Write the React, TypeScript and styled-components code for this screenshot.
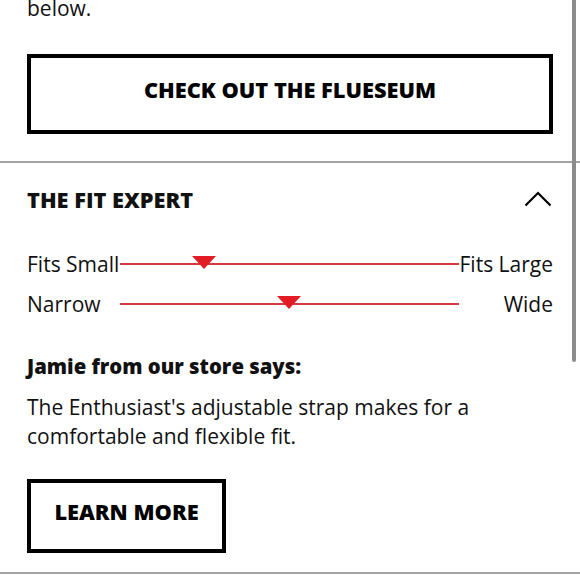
import React from "react";
import styled, { createGlobalStyle } from "styled-components";

const Global = createGlobalStyle`
  html, body { margin: 0; padding: 0; background: #fff; }
  body { font-family: "Open Sans", Lato, Arial, sans-serif; color: #111; }
  * { box-sizing: border-box; }
`;

const Page = styled.div`
  position: relative;
  width: 580px;
  height: 580px;
  overflow: hidden;
  background: #fff;
`;

const Section = styled.section`
  padding: 0 27px 27px;
  border-bottom: 2px solid #a3a3a3;
`;

const Intro = styled.p`
  margin: -7px 0 0;
  font-size: 21px;
  line-height: 30px;
`;

const OutlineButton = styled.button<{ $full?: boolean; $h: number }>`
  display: flex;
  align-items: center;
  justify-content: center;
  width: ${(p) => (p.$full ? "100%" : "199px")};
  height: ${(p) => p.$h}px;
  margin: 0;
  padding: 0 0 10px;
  background: #fff;
  border: 4px solid #000;
  font-family: inherit;
  font-weight: 800;
  font-size: 21.8px;
  color: #000;
  cursor: pointer;
`;

const TopButtonWrap = styled.div`
  margin-top: 31px;
`;

const Accordion = styled.section`
  padding: 0 27px 19px;
  border-bottom: 2px solid #a3a3a3;
`;

const Header = styled.div`
  display: flex;
  align-items: center;
  justify-content: space-between;
  height: 74px;
  padding-bottom: 2px;
`;

const Title = styled.h2`
  margin: 0;
  font-size: 21.8px;
  font-weight: 800;
`;

const Chevron = styled.svg`
  width: 28px;
  height: 16px;
  margin-right: 1px;
`;

const Sliders = styled.div`
  display: flex;
  flex-direction: column;
  gap: 12px;
  margin-top: 13px;
`;

const SliderRow = styled.div`
  display: grid;
  grid-template-columns: 93px 1fr 94px;
  align-items: center;
  height: 28px;
`;

const Label = styled.span<{ $right?: boolean }>`
  font-size: 21px;
  white-space: nowrap;
  text-align: ${(p) => (p.$right ? "right" : "left")};
  direction: ${(p) => (p.$right ? "rtl" : "ltr")};
`;

const Track = styled.div`
  position: relative;
  height: 2px;
  background: #d63a40;
`;

const Marker = styled.div`
  position: absolute;
  top: -7px;
  width: 0;
  height: 0;
  margin-left: -12.5px;
  border-left: 12.5px solid transparent;
  border-right: 12.5px solid transparent;
  border-top: 13px solid #e31b25;
`;

const Quote = styled.h3`
  margin: 35px 0 0;
  font-size: 20.3px;
  font-weight: 800;
  line-height: 26px;
`;

const Body = styled.p`
  margin: 14px 0 0;
  font-size: 21px;
  line-height: 29px;
`;

const LearnWrap = styled.div`
  margin-top: 28px;
`;

const Scrollbar = styled.div`
  position: absolute;
  top: 0;
  right: 4px;
  width: 4px;
  height: 362px;
  border-radius: 0 0 2px 2px;
  background: #8c8c8c;
`;

const sliders = [
  { left: "Fits Small", right: "Fits Large", pos: 25 },
  { left: "Narrow", right: "Wide", pos: 50 },
];

export default function App() {
  return (
    <Page>
      <Global />
      <Section>
        <Intro>below.</Intro>
        <TopButtonWrap>
          <OutlineButton $full $h={80}>CHECK OUT THE FLUESEUM</OutlineButton>
        </TopButtonWrap>
      </Section>
      <Accordion>
        <Header>
          <Title>THE FIT EXPERT</Title>
          <Chevron viewBox="0 0 28 16">
            <path d="M1.5 14.5 L14 2 L26.5 14.5" fill="none" stroke="#000" strokeWidth="2.2" />
          </Chevron>
        </Header>
        <Sliders>
          {sliders.map((s) => (
            <SliderRow key={s.left}>
              <Label>{s.left}</Label>
              <Track>
                <Marker style={{ left: `${s.pos}%` }} />
              </Track>
              <Label $right>{s.right}</Label>
            </SliderRow>
          ))}
        </Sliders>
        <Quote>Jamie from our store says:</Quote>
        <Body>
          The Enthusiast's adjustable strap makes for a
          <br />
          comfortable and flexible fit.
        </Body>
        <LearnWrap>
          <OutlineButton $h={74}>LEARN MORE</OutlineButton>
        </LearnWrap>
      </Accordion>
      <Scrollbar />
    </Page>
  );
}
